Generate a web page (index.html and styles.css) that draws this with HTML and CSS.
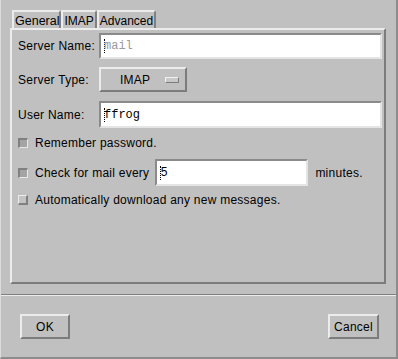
FILE: index.html
```html
<!DOCTYPE html>
<html lang="en">
<head>
    <meta charset="UTF-8">
    <meta name="viewport" content="width=device-width, initial-scale=1.0">
    <title>Mail Account</title>
    <link rel="stylesheet" href="styles.css">
</head>
<body>
    <div class="dialog">
        <div class="notebook">
            <div class="tabs">
                <div class="tab active">General</div>
                <div class="tab">IMAP</div>
                <div class="tab">Advanced</div>
            </div>
            <div class="panel">
                <div class="row row-name">
                    <span class="label">Server Name:</span>
                    <div class="entry grow"><span class="cursor"></span><span class="value dim">mail</span></div>
                </div>
                <div class="row row-type">
                    <span class="label">Server Type:</span>
                    <div class="option">
                        <span class="option-text">IMAP</span>
                        <span class="indicator"></span>
                    </div>
                </div>
                <div class="row row-user">
                    <span class="label">User Name:</span>
                    <div class="entry grow"><span class="cursor"></span><span class="value">ffrog</span></div>
                </div>
                <div class="row row-check">
                    <span class="check"></span>
                    <span class="text">Remember password.</span>
                </div>
                <div class="row row-mail">
                    <span class="check"></span>
                    <span class="text">Check for mail every</span>
                    <div class="entry minutes"><span class="cursor"></span><span class="value">5</span></div>
                    <span class="text">minutes.</span>
                </div>
                <div class="row row-auto">
                    <span class="check raised"></span>
                    <span class="text">Automatically download any new messages.</span>
                </div>
            </div>
        </div>
        <div class="separator"></div>
        <div class="footer">
            <button class="btn ok">OK</button>
            <button class="btn cancel">Cancel</button>
        </div>
    </div>
</body>
</html>
```

FILE: styles.css
```css
* {
    box-sizing: border-box;
}
body {
    margin: 0;
    background: #c0c0c0;
    font-family: 'Liberation Sans', Arial, sans-serif;
    font-size: 12px;
    letter-spacing: 0.25px;
    color: #000;
}
.dialog {
    height: 359px;
    display: flex;
    flex-direction: column;
    border-left: 1px solid #dcdcdc;
    border-right: 2px solid #8c8c8c;
    border-bottom: 2px solid #8c8c8c;
}
.notebook {
    padding: 10px 10px 0 9px;
}
.tabs {
    display: flex;
    padding-left: 2px;
    height: 18px;
}
.tab {
    height: 18px;
    padding: 2px 1px 0 1px;
    border-left: 2px solid #ececec;
    border-top: 2px solid #ececec;
    border-right: 2px solid #808080;
    border-top-right-radius: 3px;
    line-height: 14px;
    letter-spacing: 0;
}
.tab.active {
    font-size: 12.5px;
    padding-right: 0;
}
.panel {
    height: 256px;
    border-left: 2px solid #ececec;
    border-top: 2px solid #ececec;
    border-right: 2px solid #7c7c7c;
    border-bottom: 2px solid #7c7c7c;
    padding: 3px 2px 0 6px;
}
.row {
    display: flex;
    align-items: center;
}
.label {
    width: 81px;
    flex-shrink: 0;
}
.entry {
    height: 26px;
    background: #fff;
    border-left: 2px solid #8a8a8a;
    border-top: 2px solid #8a8a8a;
    border-right: 2px solid #e4e4e4;
    border-bottom: 2px solid #e4e4e4;
    display: flex;
    align-items: center;
    padding-left: 2px;
}
.grow {
    flex: 1;
}
.cursor {
    width: 3px;
    height: 14px;
    border-left: 1px dotted #000;
    margin-left: 1px;
}
.value {
    font-family: 'Liberation Mono', 'Courier New', monospace;
    font-size: 12px;
    letter-spacing: 0;
    margin-left: -3px;
}
.dim {
    color: #9a9a9a;
}
.row-type {
    margin-top: 8px;
}
.option {
    width: 88px;
    height: 25px;
    border-left: 2px solid #ececec;
    border-top: 2px solid #ececec;
    border-right: 2px solid #7c7c7c;
    border-bottom: 2px solid #7c7c7c;
    display: flex;
    align-items: center;
    padding-left: 19px;
}
.option-text {
    flex: 1;
}
.indicator {
    width: 14px;
    height: 6px;
    margin-right: 6px;
    border-left: 1px solid #f0f0f0;
    border-top: 1px solid #f0f0f0;
    border-right: 1px solid #7c7c7c;
    border-bottom: 1px solid #7c7c7c;
    background: #c8c8c8;
}
.row-user {
    margin-top: 9px;
}
.row-user .entry {
    height: 27px;
}
.row-check {
    margin-top: 8px;
    height: 14px;
}
.check {
    width: 10px;
    height: 10px;
    background: #a4a4a4;
    border-left: 2px solid #808080;
    border-top: 2px solid #808080;
    border-right: 1px solid #e8e8e8;
    border-bottom: 1px solid #e8e8e8;
    margin-right: 7px;
    flex-shrink: 0;
}
.check.raised {
    background: #c4c4c4;
    border-left: 1px solid #ececec;
    border-top: 1px solid #ececec;
    border-right: 2px solid #808080;
    border-bottom: 2px solid #808080;
}
.row-mail {
    margin-top: 9px;
}
.minutes {
    width: 153px;
    height: 27px;
    margin-left: 6px;
    margin-right: 7px;
}
.row-auto {
    margin-top: 7px;
    height: 14px;
}
.separator {
    margin-top: 10px;
    height: 2px;
    border-top: 1px solid #808080;
    border-bottom: 1px solid #ececec;
}
.footer {
    flex: 1;
    display: flex;
    justify-content: space-between;
    align-items: flex-start;
    padding: 18px 17px 0 19px;
}
.btn {
    height: 25px;
    background: #c0c0c0;
    font-family: 'Liberation Sans', Arial, sans-serif;
    font-size: 12px;
    letter-spacing: 0.25px;
    color: #000;
    border-left: 2px solid #ececec;
    border-top: 2px solid #ececec;
    border-right: 2px solid #7c7c7c;
    border-bottom: 2px solid #7c7c7c;
    padding: 0;
}
.ok {
    width: 50px;
}
.cancel {
    width: 51px;
}
```
